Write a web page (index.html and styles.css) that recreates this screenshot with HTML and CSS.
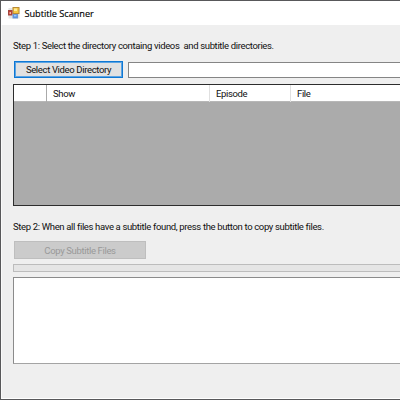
FILE: index.html
```
<!DOCTYPE html>
<html lang="en">
<head>
<meta charset="utf-8">
<title>Subtitle Scanner</title>
<link rel="stylesheet" href="styles.css">
</head>
<body>
<div class="window">
  <header class="titlebar">
    <svg class="app-icon" width="12" height="12" viewBox="0 0 12 12">
      <rect x=".5" y="1" width="11" height="10.5" fill="#e4e4e4"/>
      <rect x="5" y=".5" width="6" height="6" fill="#f5c842" stroke="#b98a35"/>
      <rect x="6" y="1.5" width="3" height="2.5" fill="#ffe99a"/>
      <rect x=".5" y="3.5" width="3.5" height="4.5" fill="#c63a2f" stroke="#a3473f"/>
      <rect x="1.5" y="5" width="1.5" height="2" fill="#f2b5a5"/>
      <rect x="5" y="7.5" width="4.5" height="3.5" fill="#4a8fe8" stroke="#6f97d2"/>
      <rect x="6" y="8" width="2.5" height="1.5" fill="#9cc9fa"/>
    </svg>
    <span class="title">Subtitle Scanner</span>
  </header>
  <main class="content">
    <p class="step step-one">Step 1: Select the directory containg videos&nbsp; and subtitle directories.</p>
    <div class="picker">
      <button class="button select"><span>Select Video Directory</span></button>
      <div class="path"></div>
    </div>
    <div class="grid">
      <div class="grid-head">
        <div class="cell"></div>
        <div class="cell">Show</div>
        <div class="cell">Episode</div>
        <div class="cell">File</div>
      </div>
    </div>
    <p class="step step-two">Step 2: When all files have a subtitle found, press the button to copy subtitle files.</p>
    <button class="button copy" disabled><span>Copy Subtitle Files</span></button>
    <div class="progress"></div>
    <div class="log"></div>
  </main>
</div>
</body>
</html>
```
FILE: styles.css
```
* { box-sizing: border-box; }
body { margin: 0; overflow: hidden; }
.window {
  width: 400px;
  height: 400px;
  display: flex;
  flex-direction: column;
  border: 1px solid #58585a;
  border-right: 0;
  background: #efefef;
  font-family: Roboto, "Liberation Sans", sans-serif;
  font-size: 9.5px;
  letter-spacing: -0.35px;
  color: #101010;
  white-space: nowrap;
}
.titlebar {
  height: 24px;
  flex: none;
  display: flex;
  align-items: center;
  gap: 4.5px;
  padding-left: 7px;
  background: #fff;
}
.title {
  font-family: "Open Sans", "Noto Sans", sans-serif;
  font-size: 9.2px;
  letter-spacing: -0.03px;
  color: #000;
  -webkit-text-stroke: 0.15px #000;
}
.content {
  flex: 1;
  display: flex;
  flex-direction: column;
  padding-left: 11px;
  border-left: 1px solid #fafafa;
  border-bottom: 1px solid #fff;
}
.step { margin: 0; height: 12px; line-height: 12px; }
.step-one { margin-top: 15px; }
.picker { display: flex; gap: 5px; margin-top: 9px; }
.button {
  display: flex;
  align-items: center;
  justify-content: center;
  margin-left: 1px;
  padding: 0;
  font: inherit;
  letter-spacing: inherit;
  color: #101010;
  background: #e1e1e1;
}
.select {
  width: 109px;
  height: 17px;
  border: 1px solid #0f78d4;
  outline: 1px solid #5ca4e3;
  outline-offset: -2px;
}
.path {
  flex: 1;
  height: 16px;
  margin-top: 1px;
  border: 1px solid #858585;
  border-right: 0;
  background: #fff;
}
.grid {
  height: 122px;
  margin-top: 6px;
  border: 1px solid #2d2d2d;
  border-right: 0;
  background: #ababab;
}
.grid-head {
  display: grid;
  grid-template-columns: 33px 163px 81px 1fr;
  height: 17px;
  background: #fff;
  border-bottom: 1px solid #b7b7b7;
}
.cell { padding-left: 6px; line-height: 17px; border-right: 1px solid #e0e0e0; }
.cell:first-child { border-right-color: #aaa; }
.cell:last-child { border-right: 0; }
.step-two { margin-top: 15px; }
.copy {
  width: 132px;
  height: 18px;
  margin-top: 8px;
  flex: none;
  border: 1px solid #bebebe;
  background: #cbcbcb;
  color: #999;
}
.progress {
  height: 8px;
  margin-top: 5px;
  border: 1px solid #bcbcbc;
  border-right: 0;
  background: #e5e5e5;
}
.log {
  height: 87px;
  margin-top: 5px;
  border: 1px solid #8b8b8b;
  border-bottom-color: #a4a4a4;
  border-right: 0;
  background: #fff;
}
```
